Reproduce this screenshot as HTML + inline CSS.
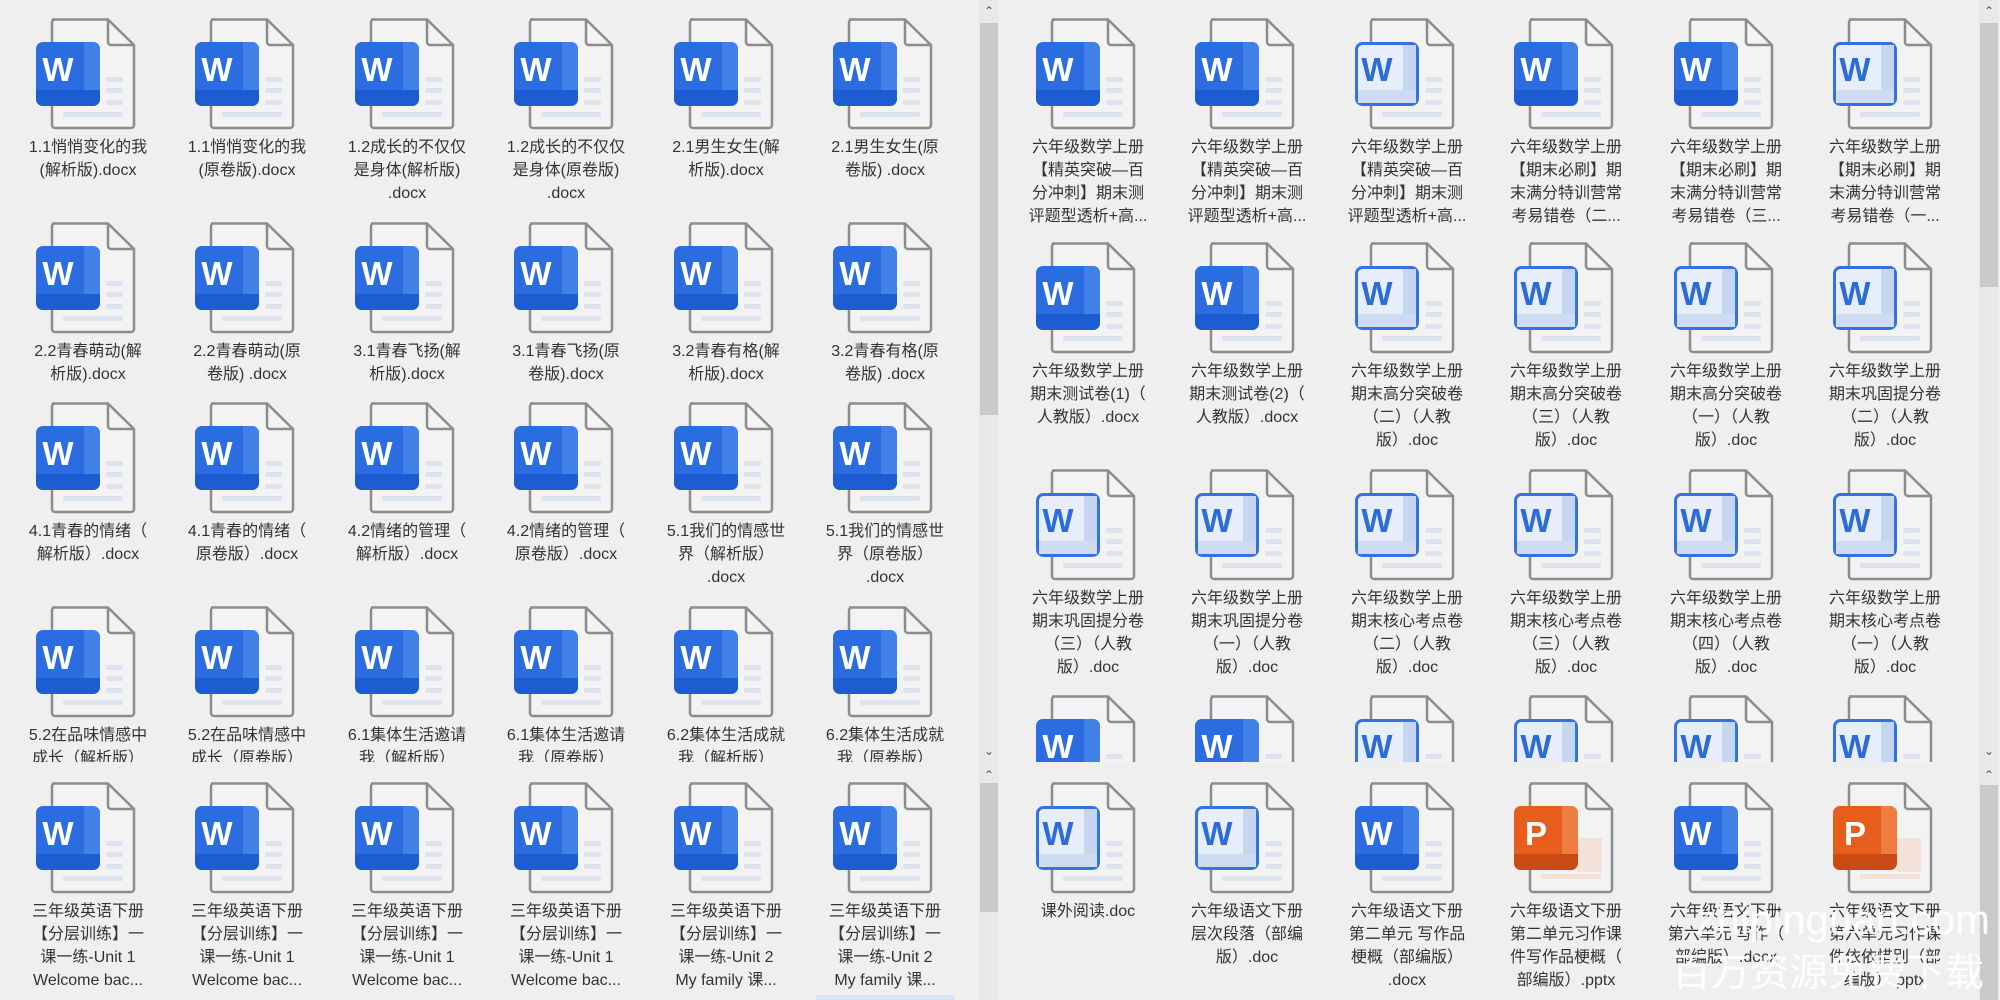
<!DOCTYPE html>
<html><head><meta charset="utf-8"><style>
body{margin:0;width:2000px;height:1000px;background:#efefef;overflow:hidden;position:relative;font-family:"Liberation Sans","Noto Sans CJK SC",sans-serif;}
.p{position:absolute;overflow:hidden;background:#efefef}
.c{position:absolute;width:150px;text-align:center;font-size:16px;line-height:23px;color:#333}
.c svg{display:block;margin-left:23px;width:100px;height:112px}
.c div{margin-top:6px}
.sb{position:absolute;width:20px;background:#e9e9e9}
.th{position:absolute;left:1px;width:18px;background:#c9c9c9}
.ar{position:absolute;left:0;width:20px;text-align:center;font-size:12px;color:#555;line-height:14px}
.wm{position:absolute;color:rgba(255,255,255,.92);white-space:nowrap}
</style></head><body>
<svg width="0" height="0" style="position:absolute">
<defs>
<g id="file"><path d="M16 1.5H72L98 27V107a3 3 0 0 1-3 3H19a3 3 0 0 1-3-3V4.5a3 3 0 0 1 3-3z" fill="#f3f3f3" stroke="#8c8c8c" stroke-width="2.5"/><path d="M72 1.5V24a3 3 0 0 0 3 3H98" fill="none" stroke="#8c8c8c" stroke-width="2.5"/>
<rect x="70" y="59" width="17" height="5" rx="2" fill="#dde3ee"/><rect x="70" y="70" width="17" height="5" rx="2" fill="#dde3ee"/><rect x="70" y="82" width="17" height="5" rx="2" fill="#dde3ee"/><rect x="27" y="94" width="60" height="5" rx="2" fill="#dde3ee"/></g>
<symbol id="wf" viewBox="0 0 100 112"><use href="#file"/><rect x="0" y="24" width="64" height="64" rx="7" fill="#2b6de0"/><path d="M48 24h9a7 7 0 0 1 7 7v50a7 7 0 0 1-7 7h-9z" fill="#4282e8"/><path d="M0 72h64v9a7 7 0 0 1-7 7H7a7 7 0 0 1-7-7z" fill="#1c5dd2"/><text x="22" y="63" font-family="Liberation Sans" font-weight="bold" font-size="33" fill="#fff" text-anchor="middle">W</text></symbol>
<symbol id="wo" viewBox="0 0 100 112"><use href="#file"/><rect x="1.5" y="25.5" width="61" height="61" rx="6" fill="#e8eef9" stroke="#3274df" stroke-width="3"/><rect x="48" y="27" width="13" height="58" fill="#c6d6f1"/><rect x="3" y="72" width="58" height="13" fill="#cedbf1"/><text x="22" y="63" font-family="Liberation Sans" font-weight="bold" font-size="33" fill="#2c6cd8" text-anchor="middle">W</text></symbol>
<symbol id="pp" viewBox="0 0 100 112"><g><path d="M16 1.5H72L98 27V107a3 3 0 0 1-3 3H19a3 3 0 0 1-3-3V4.5a3 3 0 0 1 3-3z" fill="#f3f3f3" stroke="#8c8c8c" stroke-width="2.5"/><path d="M72 1.5V24a3 3 0 0 0 3 3H98" fill="none" stroke="#8c8c8c" stroke-width="2.5"/><rect x="64" y="56" width="24" height="34" fill="#f4e2d8"/><rect x="27" y="92" width="60" height="5" fill="#f4e2d8"/></g><rect x="0" y="24" width="64" height="64" rx="7" fill="#e65d1c"/><path d="M48 24h9a7 7 0 0 1 7 7v50a7 7 0 0 1-7 7h-9z" fill="#ef7c40"/><path d="M0 72h64v9a7 7 0 0 1-7 7H7a7 7 0 0 1-7-7z" fill="#c94b13"/><text x="22" y="63" font-family="Liberation Sans" font-weight="bold" font-size="33" fill="#fff" text-anchor="middle">P</text></symbol>
</defs></svg>

<!-- top-left -->
<div class="p" style="left:0;top:0;width:979px;height:762px">
<div class="c" style="left:13px;top:18px"><svg><use href="#wf"/></svg><div>1.1悄悄变化的我<br>(解析版).docx</div></div>
<div class="c" style="left:172px;top:18px"><svg><use href="#wf"/></svg><div>1.1悄悄变化的我<br>(原卷版).docx</div></div>
<div class="c" style="left:332px;top:18px"><svg><use href="#wf"/></svg><div>1.2成长的不仅仅<br>是身体(解析版)<br>.docx</div></div>
<div class="c" style="left:491px;top:18px"><svg><use href="#wf"/></svg><div>1.2成长的不仅仅<br>是身体(原卷版)<br>.docx</div></div>
<div class="c" style="left:651px;top:18px"><svg><use href="#wf"/></svg><div>2.1男生女生(解<br>析版).docx</div></div>
<div class="c" style="left:810px;top:18px"><svg><use href="#wf"/></svg><div>2.1男生女生(原<br>卷版) .docx</div></div>

<div class="c" style="left:13px;top:222px"><svg><use href="#wf"/></svg><div>2.2青春萌动(解<br>析版).docx</div></div>
<div class="c" style="left:172px;top:222px"><svg><use href="#wf"/></svg><div>2.2青春萌动(原<br>卷版) .docx</div></div>
<div class="c" style="left:332px;top:222px"><svg><use href="#wf"/></svg><div>3.1青春飞扬(解<br>析版).docx</div></div>
<div class="c" style="left:491px;top:222px"><svg><use href="#wf"/></svg><div>3.1青春飞扬(原<br>卷版).docx</div></div>
<div class="c" style="left:651px;top:222px"><svg><use href="#wf"/></svg><div>3.2青春有格(解<br>析版).docx</div></div>
<div class="c" style="left:810px;top:222px"><svg><use href="#wf"/></svg><div>3.2青春有格(原<br>卷版) .docx</div></div>

<div class="c" style="left:13px;top:402px"><svg><use href="#wf"/></svg><div>4.1青春的情绪（<br>解析版）.docx</div></div>
<div class="c" style="left:172px;top:402px"><svg><use href="#wf"/></svg><div>4.1青春的情绪（<br>原卷版）.docx</div></div>
<div class="c" style="left:332px;top:402px"><svg><use href="#wf"/></svg><div>4.2情绪的管理（<br>解析版）.docx</div></div>
<div class="c" style="left:491px;top:402px"><svg><use href="#wf"/></svg><div>4.2情绪的管理（<br>原卷版）.docx</div></div>
<div class="c" style="left:651px;top:402px"><svg><use href="#wf"/></svg><div>5.1我们的情感世<br>界（解析版）<br>.docx</div></div>
<div class="c" style="left:810px;top:402px"><svg><use href="#wf"/></svg><div>5.1我们的情感世<br>界（原卷版）<br>.docx</div></div>

<div class="c" style="left:13px;top:606px"><svg><use href="#wf"/></svg><div>5.2在品味情感中<br>成长（解析版）</div></div>
<div class="c" style="left:172px;top:606px"><svg><use href="#wf"/></svg><div>5.2在品味情感中<br>成长（原卷版）</div></div>
<div class="c" style="left:332px;top:606px"><svg><use href="#wf"/></svg><div>6.1集体生活邀请<br>我（解析版）</div></div>
<div class="c" style="left:491px;top:606px"><svg><use href="#wf"/></svg><div>6.1集体生活邀请<br>我（原卷版）</div></div>
<div class="c" style="left:651px;top:606px"><svg><use href="#wf"/></svg><div>6.2集体生活成就<br>我（解析版）</div></div>
<div class="c" style="left:810px;top:606px"><svg><use href="#wf"/></svg><div>6.2集体生活成就<br>我（原卷版）</div></div>
</div>
<div class="sb" style="left:979px;top:0;height:762px"><div class="ar" style="top:4px">&#8963;</div><div class="th" style="top:23px;height:392px"></div><div class="ar" style="top:744px">&#8964;</div></div>

<!-- bottom-left -->
<div class="p" style="left:0;top:762px;width:979px;height:238px">
<div class="c" style="left:13px;top:20px"><svg><use href="#wf"/></svg><div>三年级英语下册<br>【分层训练】一<br>课一练-Unit 1<br>Welcome bac...</div></div>
<div class="c" style="left:172px;top:20px"><svg><use href="#wf"/></svg><div>三年级英语下册<br>【分层训练】一<br>课一练-Unit 1<br>Welcome bac...</div></div>
<div class="c" style="left:332px;top:20px"><svg><use href="#wf"/></svg><div>三年级英语下册<br>【分层训练】一<br>课一练-Unit 1<br>Welcome bac...</div></div>
<div class="c" style="left:491px;top:20px"><svg><use href="#wf"/></svg><div>三年级英语下册<br>【分层训练】一<br>课一练-Unit 1<br>Welcome bac...</div></div>
<div class="c" style="left:651px;top:20px"><svg><use href="#wf"/></svg><div>三年级英语下册<br>【分层训练】一<br>课一练-Unit 2<br>My family 课...</div></div>
<div class="c" style="left:810px;top:20px"><svg><use href="#wf"/></svg><div>三年级英语下册<br>【分层训练】一<br>课一练-Unit 2<br>My family 课...</div></div>
<div style="position:absolute;left:816px;top:233px;width:138px;height:5px;background:#d6e6f5"></div>
</div>
<div class="sb" style="left:979px;top:762px;height:238px"><div class="ar" style="top:6px">&#8963;</div><div class="th" style="top:21px;height:129px"></div></div>

<!-- top-right -->
<div class="p" style="left:999px;top:0;width:980px;height:762px">
<div class="c" style="left:14px;top:18px"><svg><use href="#wf"/></svg><div>六年级数学上册<br>【精英突破—百<br>分冲刺】期末测<br>评题型透析+高...</div></div>
<div class="c" style="left:173px;top:18px"><svg><use href="#wf"/></svg><div>六年级数学上册<br>【精英突破—百<br>分冲刺】期末测<br>评题型透析+高...</div></div>
<div class="c" style="left:333px;top:18px"><svg><use href="#wo"/></svg><div>六年级数学上册<br>【精英突破—百<br>分冲刺】期末测<br>评题型透析+高...</div></div>
<div class="c" style="left:492px;top:18px"><svg><use href="#wf"/></svg><div>六年级数学上册<br>【期末必刷】期<br>末满分特训营常<br>考易错卷（二...</div></div>
<div class="c" style="left:652px;top:18px"><svg><use href="#wf"/></svg><div>六年级数学上册<br>【期末必刷】期<br>末满分特训营常<br>考易错卷（三...</div></div>
<div class="c" style="left:811px;top:18px"><svg><use href="#wo"/></svg><div>六年级数学上册<br>【期末必刷】期<br>末满分特训营常<br>考易错卷（一...</div></div>

<div class="c" style="left:14px;top:242px"><svg><use href="#wf"/></svg><div>六年级数学上册<br>期末测试卷(1)（<br>人教版）.docx</div></div>
<div class="c" style="left:173px;top:242px"><svg><use href="#wf"/></svg><div>六年级数学上册<br>期末测试卷(2)（<br>人教版）.docx</div></div>
<div class="c" style="left:333px;top:242px"><svg><use href="#wo"/></svg><div>六年级数学上册<br>期末高分突破卷<br>（二）（人教<br>版）.doc</div></div>
<div class="c" style="left:492px;top:242px"><svg><use href="#wo"/></svg><div>六年级数学上册<br>期末高分突破卷<br>（三）（人教<br>版）.doc</div></div>
<div class="c" style="left:652px;top:242px"><svg><use href="#wo"/></svg><div>六年级数学上册<br>期末高分突破卷<br>（一）（人教<br>版）.doc</div></div>
<div class="c" style="left:811px;top:242px"><svg><use href="#wo"/></svg><div>六年级数学上册<br>期末巩固提分卷<br>（二）（人教<br>版）.doc</div></div>

<div class="c" style="left:14px;top:469px"><svg><use href="#wo"/></svg><div>六年级数学上册<br>期末巩固提分卷<br>（三）（人教<br>版）.doc</div></div>
<div class="c" style="left:173px;top:469px"><svg><use href="#wo"/></svg><div>六年级数学上册<br>期末巩固提分卷<br>（一）（人教<br>版）.doc</div></div>
<div class="c" style="left:333px;top:469px"><svg><use href="#wo"/></svg><div>六年级数学上册<br>期末核心考点卷<br>（二）（人教<br>版）.doc</div></div>
<div class="c" style="left:492px;top:469px"><svg><use href="#wo"/></svg><div>六年级数学上册<br>期末核心考点卷<br>（三）（人教<br>版）.doc</div></div>
<div class="c" style="left:652px;top:469px"><svg><use href="#wo"/></svg><div>六年级数学上册<br>期末核心考点卷<br>（四）（人教<br>版）.doc</div></div>
<div class="c" style="left:811px;top:469px"><svg><use href="#wo"/></svg><div>六年级数学上册<br>期末核心考点卷<br>（一）（人教<br>版）.doc</div></div>

<div class="c" style="left:14px;top:695px"><svg><use href="#wf"/></svg></div>
<div class="c" style="left:173px;top:695px"><svg><use href="#wf"/></svg></div>
<div class="c" style="left:333px;top:695px"><svg><use href="#wo"/></svg></div>
<div class="c" style="left:492px;top:695px"><svg><use href="#wo"/></svg></div>
<div class="c" style="left:652px;top:695px"><svg><use href="#wo"/></svg></div>
<div class="c" style="left:811px;top:695px"><svg><use href="#wo"/></svg></div>
</div>
<div class="sb" style="left:1979px;top:0;height:762px"><div class="ar" style="top:4px">&#8963;</div><div class="th" style="top:23px;height:264px"></div><div class="ar" style="top:744px">&#8964;</div></div>

<!-- bottom-right -->
<div class="p" style="left:999px;top:762px;width:980px;height:238px">
<div class="c" style="left:14px;top:20px"><svg><use href="#wo"/></svg><div>课外阅读.doc</div></div>
<div class="c" style="left:173px;top:20px"><svg><use href="#wo"/></svg><div>六年级语文下册<br>层次段落（部编<br>版）.doc</div></div>
<div class="c" style="left:333px;top:20px"><svg><use href="#wf"/></svg><div>六年级语文下册<br>第二单元 写作品<br>梗概（部编版）<br>.docx</div></div>
<div class="c" style="left:492px;top:20px"><svg><use href="#pp"/></svg><div>六年级语文下册<br>第二单元习作课<br>件写作品梗概（<br>部编版）.pptx</div></div>
<div class="c" style="left:652px;top:20px"><svg><use href="#wf"/></svg><div>六年级语文下册<br>第六单元 写作（<br>部编版）.docx</div></div>
<div class="c" style="left:811px;top:20px"><svg><use href="#pp"/></svg><div>六年级语文下册<br>第六单元习作课<br>件依依惜别（部<br>编版）.pptx</div></div>
</div>
<div class="sb" style="left:1979px;top:762px;height:238px"><div class="ar" style="top:6px">&#8963;</div><div class="th" style="top:23px;height:215px"></div></div>

<div class="wm" style="right:10px;top:898px;font-size:42px;line-height:44px;font-family:'Liberation Sans',sans-serif">zhipinguan.com</div>
<div class="wm" style="left:1672px;top:950px;font-size:39px;line-height:40px;font-family:'Noto Sans CJK SC',sans-serif">百万资源免费下载</div>
</body></html>
